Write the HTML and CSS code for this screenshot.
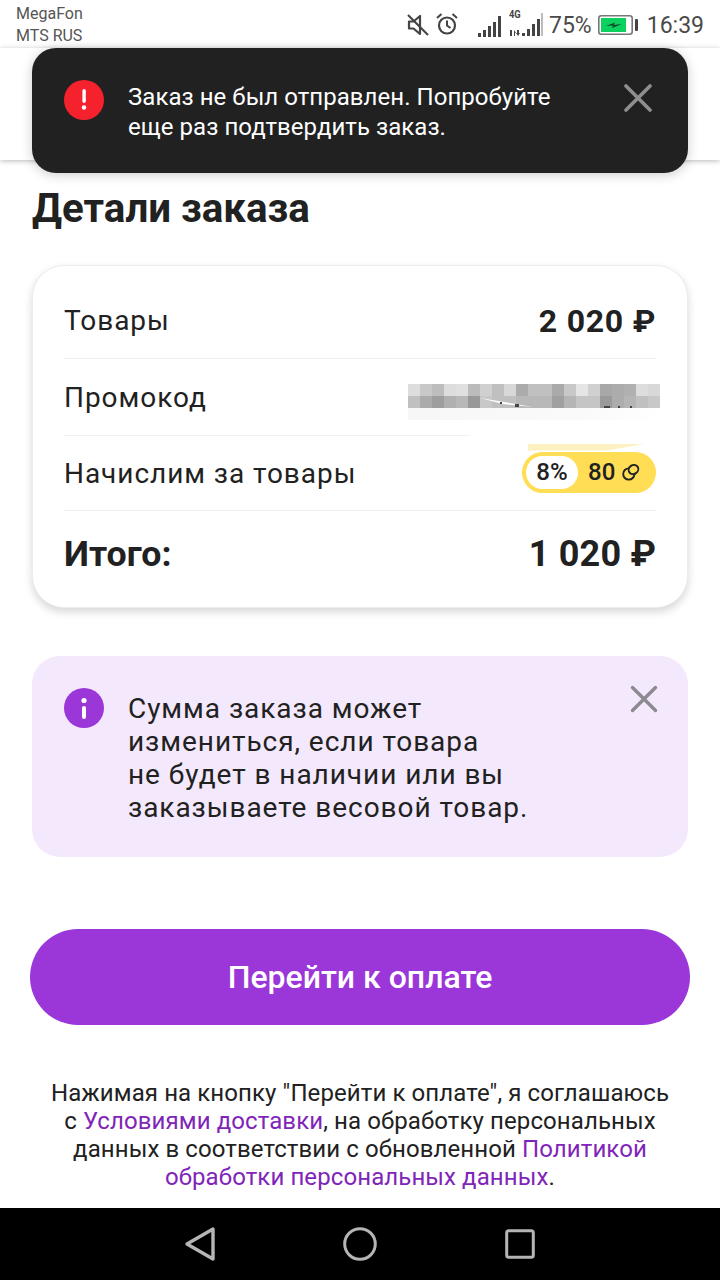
FILE: index.html
```html
<!DOCTYPE html>
<html lang="ru">
<head>
<meta charset="utf-8">
<title>Детали заказа</title>
<link rel="stylesheet" href="styles.css">
</head>
<body>
<div class="phone">
  <div class="statusbar">
    <div class="carriers"><span>MegaFon</span><span>MTS RUS</span></div>
    <div class="status-icons">
      <svg class="ic-mute" width="22" height="22" viewBox="0 0 22 22"><path d="M2 7.5h4.5L13 2v18l-6.5-5.5H2z" fill="none" stroke="#444" stroke-width="2.2" stroke-linejoin="round"/><path d="M1 1l20 20" stroke="#444" stroke-width="2.2"/></svg>
      <svg class="ic-alarm" width="22" height="22" viewBox="0 0 22 22"><circle cx="11" cy="12.5" r="8" fill="none" stroke="#444" stroke-width="2.2"/><path d="M11 7.5v5l3.5 2.5M1 5l4.5-4M21 5l-4.5-4" fill="none" stroke="#444" stroke-width="2"/></svg>
      <svg class="ic-sig1" width="23" height="21" viewBox="0 0 23 21"><path d="M0 17h3v4H0zM5 14h3v7H5zM10 10h3v11h-3zM15 6h3v15h-3zM20 0h3v21h-3z" fill="#444"/></svg>
      <div class="sim2">
        <span class="tag-4g">4G</span>
        <svg width="34" height="24" viewBox="0 0 34 24"><path d="M1 17h2v6H1zM5 17l2 3H6v3H5zM8 17h2v3h1l-2 3-2-3h1z" fill="#444"/><path d="M13 20h3v3h-3zM18 16h3v7h-3zM23 11h3v12h-3zM28 6h3v17h-3z" fill="#444"/><path d="M32 0h2v23h-2z" fill="#bbb"/></svg>
      </div>
      <span class="pct">75%</span>
      <svg class="ic-batt" width="40" height="20" viewBox="0 0 40 20"><rect x="0.8" y="0.8" width="33.4" height="18.4" rx="2.5" fill="#fff" stroke="#777" stroke-width="1.6"/><rect x="3" y="3" width="25" height="14" fill="#0bd25f"/><path d="M8 11l9-3.5-1 2.5 8-1-10 4 1-2.5z" fill="#0f4a2a"/><rect x="37" y="4" width="3" height="12" rx="1" fill="#444"/></svg>
      <span class="clock">16:39</span>
    </div>
  </div>

  <div class="topbar"></div>

  <main class="content">
    <h1 class="title">Детали заказа</h1>

    <section class="card">
      <div class="row row-goods">
        <span class="label">Товары</span><span class="value">2 020 ₽</span>
      </div>
      <div class="row row-promo">
        <span class="label">Промокод</span>
        <div class="mosaic" aria-hidden="true">
          <div class="m1"></div><div class="m2"></div><div class="m3"></div>
          <div class="m4"></div>
          <svg class="m-scrap" width="252" height="12" viewBox="0 0 252 12"><path d="M72 2l53 9-30-3z" fill="#fff"/><path d="M92 6h2v2h-2zM107 8h4v3h-4zM196 10h6v2h-6zM210 10h2v2h-2zM222 10h2v2h-2z" fill="#444"/></svg>
        </div>
      </div>
      <div class="row row-bonus">
        <span class="label">Начислим за товары</span>
        <div class="pill-wrap">
          <span class="sliver"></span>
          <div class="pill">
            <span class="pill-pct">8%</span>
            <span class="pill-val">80</span>
            <svg class="coin" width="18" height="18" viewBox="0 0 18 18"><circle cx="6.8" cy="11" r="5.6" fill="none" stroke="#212121" stroke-width="1.9"/><ellipse cx="11.5" cy="6.5" rx="5" ry="4.4" transform="rotate(-35 11.5 6.5)" fill="#ffdd55" stroke="#212121" stroke-width="1.9"/></svg>
          </div>
        </div>
      </div>
      <div class="row row-total">
        <span class="total-label">Итого:</span><span class="total-value">1 020 ₽</span>
      </div>
    </section>

    <section class="notice">
      <svg class="notice-ic" width="40" height="40" viewBox="0 0 40 40"><circle cx="20" cy="20" r="20" fill="#9b36d9"/><circle cx="20" cy="12.5" r="2.6" fill="#fff"/><rect x="18" y="18" width="4" height="13" rx="2" fill="#fff"/></svg>
      <p class="notice-text">Сумма заказа может<br>измениться, если товара<br>не будет в наличии или вы<br>заказываете весовой товар.</p>
      <svg class="notice-x" width="28" height="28" viewBox="0 0 28 28"><path d="M2.5 2.5l23 23M25.5 2.5l-23 23" stroke="#8c8a90" stroke-width="3.4" stroke-linecap="round"/></svg>
    </section>

    <button class="cta" type="button">Перейти к оплате</button>

    <p class="legal">Нажимая на кнопку "Перейти к оплате", я соглашаюсь<br>с <a class="lnk">Условиями доставки</a>, на обработку персональных<br>данных в соответствии с обновленной <a class="lnk">Политикой<br>обработки персональных данных</a>.</p>
  </main>

  <nav class="navbar">
    <svg class="nav-back" width="32" height="36" viewBox="0 0 32 36"><path d="M29 3v30L3 18z" fill="none" stroke="#b5b5b5" stroke-width="3.4" stroke-linejoin="round"/></svg>
    <svg width="34" height="34" viewBox="0 0 34 34"><circle cx="17" cy="17" r="15.3" fill="none" stroke="#b5b5b5" stroke-width="3"/></svg>
    <svg width="30" height="30" viewBox="0 0 30 30"><rect x="1.7" y="1.7" width="26.6" height="26.6" rx="2" fill="none" stroke="#b5b5b5" stroke-width="3"/></svg>
  </nav>

  <div class="toast">
    <svg class="toast-ic" width="40" height="40" viewBox="0 0 40 40"><circle cx="20" cy="20" r="20" fill="#f5222d"/><rect x="18.4" y="9" width="3.4" height="14" rx="1.7" fill="#fff"/><circle cx="20" cy="27.5" r="2.2" fill="#fff"/></svg>
    <p class="toast-text">Заказ не был отправлен. Попробуйте<br>еще раз подтвердить заказ.</p>
    <svg class="toast-x" width="28" height="28" viewBox="0 0 28 28"><path d="M2 2l24 24M26 2L2 26" stroke="#8f8f8f" stroke-width="3.6" stroke-linecap="round"/></svg>
  </div>
</div>
</body>
</html>
```

FILE: styles.css
```css
* { box-sizing: border-box; }
html, body { margin: 0; padding: 0; }
body { font-family: Roboto, "Noto Sans", sans-serif; color: #212121; background: #fff; }

.phone { position: relative; width: 720px; height: 1280px; overflow: hidden; background: #fff; display: flex; flex-direction: column; }

.statusbar { height: 48px; display: flex; justify-content: space-between; background: #fff; padding: 3px 16px 0; flex: none; }
.carriers { display: flex; flex-direction: column; font-size: 16px; line-height: 21.5px; color: #555; }
.status-icons { display: flex; align-items: center; height: 44px; color: #444; }
.ic-alarm { margin-left: 7px; margin-top: -2px; }
.ic-sig1 { margin-left: 20px; margin-top: 2px; }
.sim2 { position: relative; width: 34px; height: 24px; margin-left: 8px; }
.tag-4g { position: absolute; left: 0; top: -4px; font-size: 11px; font-weight: 700; line-height: 12px; color: #444; transform: scaleX(.85); transform-origin: left top; }
.pct { font-size: 23px; margin-left: 6px; color: #4a4a4a; }
.ic-batt { margin-left: 6px; }
.clock { font-size: 23px; margin-left: 9px; color: #4a4a4a; }

.topbar { height: 112px; flex: none; background: #fff; box-shadow: 0 1px 5px rgba(0,0,0,.28); position: relative; }

.content { flex: 1; padding: 0 32px; display: flex; flex-direction: column; min-height: 0; background: #fff; }
.title { margin: 25px 0 0; font-size: 40.3px; line-height: 48px; font-weight: 700; }

.card { margin-top: 32px; height: 343px; border: 1px solid #ececec; border-radius: 32px; background: #fff; box-shadow: 0 4px 8px rgba(0,0,0,.16); padding: 17px 31px 0; display: flex; flex-direction: column; flex: none; }
.row { display: flex; justify-content: space-between; align-items: center; border-bottom: 1px solid #f1f1f1; flex: none; }
.row-goods { height: 76px; }
.row-promo { height: 77px; position: relative; }
.row-bonus { height: 75px; }
.row-total { height: 86px; border-bottom: 0; }
.label { font-size: 28px; letter-spacing: .95px; color: #212121; }
.value { font-size: 32px; font-weight: 700; letter-spacing: .75px; }
.total-label { font-size: 35.7px; font-weight: 700; }
.total-value { font-size: 36px; font-weight: 700; letter-spacing: .2px; }

.mosaic { position: absolute; left: 344px; top: 25px; width: 252px; box-shadow: 0 0 12px 5px rgba(255,255,255,.9); }
.mosaic div { height: 12px; }
.m1 { background: linear-gradient(90deg, #dddddd 0 12px, #c8c8c8 12px 24px, #bdbdbd 24px 36px, #dddddd 36px 48px, #e0e0e0 48px 60px, #bbbbbb 60px 72px, #d0d0d0 72px 84px, #c0c0c0 84px 96px, #d8d8d8 96px 108px, #ababab 108px 120px, #c0c0c0 120px 144px, #aaaaaa 144px 156px, #c8c8c8 156px 168px, #e5e5e5 168px 180px, #d0d0d0 180px 192px, #a8a8a8 192px 204px, #acacac 204px 216px, #b0b0b0 216px 228px, #dddddd 228px 240px, #d8d8d8 240px 252px); }
.m2 { background: linear-gradient(90deg, #c0c0c0 0 12px, #ababab 12px 24px, #9e9e9e 24px 36px, #b0b0b0 36px 48px, #b8b8b8 48px 60px, #989898 60px 72px, #c8c8c8 72px 84px, #c0c0c0 84px 108px, #b8b8b8 108px 144px, #a0a0a0 144px 156px, #b5b5b5 156px 168px, #c5c5c5 168px 192px, #9a9a9a 192px 204px, #acacac 204px 216px, #b5b5b5 216px 228px, #c0c0c0 228px 240px, #c8c8c8 240px 252px); }
.m3 { background: linear-gradient(90deg, #f7f7f7, #fafafa 70%, #ffffff); }
.mosaic .m4 { position: absolute; left: 32px; top: 36px; width: 220px; height: 24px; background: #fff; clip-path: polygon(0 0, 220px 0, 220px 24px, 88px 24px, 27px 15px, 0 10px); }
.m-scrap { position: absolute; left: 0; top: 12px; }

.pill-wrap { position: relative; margin-top: -2px; }
.sliver { position: absolute; left: 6px; top: -8px; width: 119px; height: 7px; background: #fdf1c1; clip-path: polygon(0 0, 100% 0, 66% 100%, 0 100%); }
.pill { width: 134px; height: 41px; border-radius: 21px; background: #ffdd55; padding: 4px; display: flex; align-items: center; }
.pill-pct { width: 52px; height: 33px; border-radius: 17px; background: #fff; font-size: 24px; font-weight: 500; line-height: 33px; text-align: center; }
.pill-val { font-size: 24px; font-weight: 500; margin-left: 10px; }
.coin { margin-left: 7px; }

.notice { margin-top: 48px; height: 201px; border-radius: 28px; background: #f4e8fc; position: relative; display: flex; padding: 32px 32px 0; flex: none; }
.notice-ic { flex: none; }
.notice-text { margin: 4px 0 0 24px; font-size: 28px; line-height: 33px; letter-spacing: .95px; color: #212121; }
.notice-x { position: absolute; right: 30px; top: 29px; }

.cta { margin: 72px -2px 0; height: 96px; flex: none; border: 0; border-radius: 48px; background: #9b36d9; color: #fff; font-family: inherit; font-size: 32px; font-weight: 500; }

.legal { margin: 54px -10px 0; font-size: 24px; line-height: 28px; letter-spacing: .1px; text-align: center; color: #212121; }
.lnk { color: #7f25b8; }

.navbar { height: 72px; flex: none; background: #000; display: flex; justify-content: space-between; align-items: center; padding: 0 185px 0 184px; position: relative; }
.nav-back { margin-right: -2px; }

.toast { position: absolute; left: 32px; top: 48px; width: 656px; height: 125px; border-radius: 24px; background: #212121; box-shadow: 0 2px 12px rgba(0,0,0,.2); display: flex; padding: 32px 36px 0 32px; color: #fff; }
.toast-ic { flex: none; }
.toast-text { margin: 2px 0 0 24px; flex: 1; font-size: 24px; line-height: 30px; color: #fff; letter-spacing: .04px; }
.toast-x { flex: none; margin-top: 4px; }
```
